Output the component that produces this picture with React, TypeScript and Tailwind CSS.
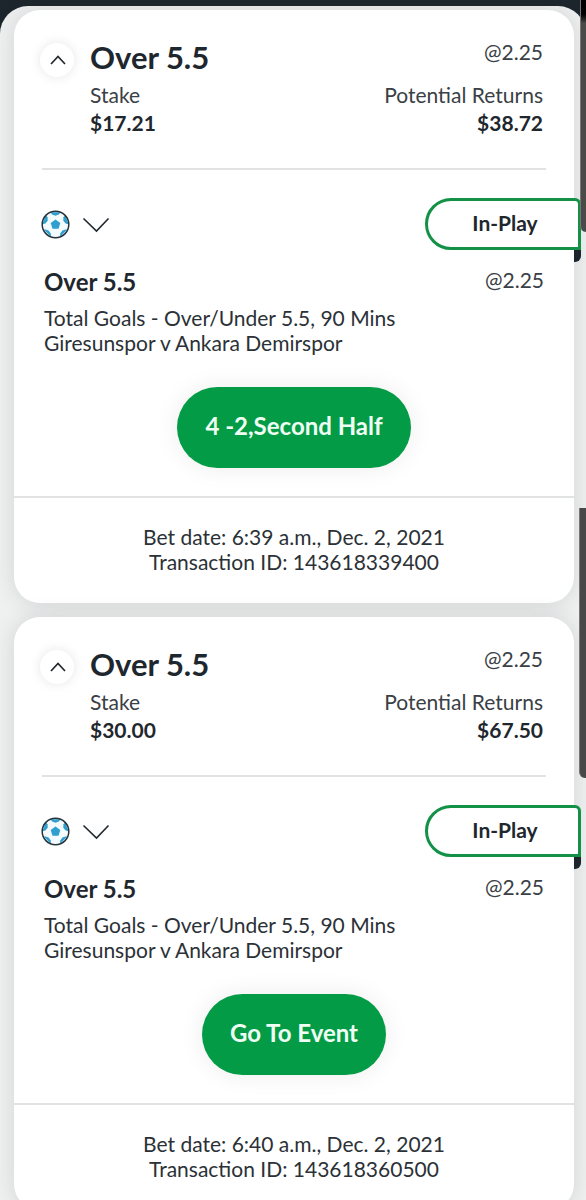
import React from 'react'

const bets = [
  {
    id: '143618339400',
    selection: 'Over 5.5',
    odds: '@2.25',
    stake: '$17.21',
    returns: '$38.72',
    market: 'Total Goals - Over/Under 5.5, 90 Mins',
    event: 'Giresunspor v Ankara Demirspor',
    action: '4 -2,Second Half',
    date: '6:39 a.m., Dec. 2, 2021',
  },
  {
    id: '143618360500',
    selection: 'Over 5.5',
    odds: '@2.25',
    stake: '$30.00',
    returns: '$67.50',
    market: 'Total Goals - Over/Under 5.5, 90 Mins',
    event: 'Giresunspor v Ankara Demirspor',
    action: 'Go To Event',
    date: '6:40 a.m., Dec. 2, 2021',
  },
]

type Bet = (typeof bets)[number]

function BallIcon() {
  return (
    <svg width="29" height="29" viewBox="0 0 29 29" aria-hidden="true">
      <circle cx="14.5" cy="14.5" r="13.2" fill="#f4fbff" />
      <g fill="#2f9fd0">
        <path d="M14.5 9.6l4.8 3.5-1.8 5.6h-6l-1.8-5.6z" />
        <path d="M9.5 2.2h10l-1.6 2.4-3.4 1.2-3.4-1.2z" />
        <path d="M24.2 5.3l3.3 9-2.9-.7-2.3-2.9.1-3.4z" />
        <path d="M4.8 5.3l-3.3 9 2.9-.7 2.3-2.9-.1-3.4z" />
        <path d="M26.3 19.6l-7.2 7.2.1-3.4 2.2-2.8 3.2-1z" />
        <path d="M2.7 19.6l7.2 7.2-.1-3.4-2.2-2.8-3.2-1z" />
      </g>
      <circle
        cx="14.5"
        cy="14.5"
        r="13.3"
        fill="none"
        stroke="#26343d"
        strokeWidth="1.5"
      />
    </svg>
  )
}

function BetCard({ bet }: { bet: Bet }) {
  return (
    <article className="rounded-[26px] bg-white pt-[29px] pb-[29px] shadow-[0_0_22px_rgba(35,37,40,0.14)]">
      <header className="flex items-start pr-[31px] pl-[26px]">
        <button
          aria-label="Collapse bet"
          className="mt-1 mr-4 flex size-[34px] shrink-0 items-center justify-center rounded-full bg-white pl-0.5 shadow-[0_0_12px_rgba(0,0,0,0.1)]"
        >
          <svg width="16" height="10" viewBox="0 0 16 10" fill="none">
            <path d="M1 9l7-7.5L15 9" stroke="#22282d" strokeWidth="1.7" />
          </svg>
        </button>
        <div className="flex-1">
          <h2 className="mb-1.5 text-[31px] leading-9 font-bold">
            {bet.selection}
          </h2>
          <p className="text-[21px] leading-7 text-[#3a4045]">Stake</p>
          <p className="text-[21px] leading-7 font-bold">{bet.stake}</p>
        </div>
        <div className="text-right">
          <p className="mb-4 text-[21px] leading-[26px] text-[#3a4045]">
            {bet.odds}
          </p>
          <p className="text-[21px] leading-7 text-[#3a4045]">
            Potential Returns
          </p>
          <p className="text-[21px] leading-7 font-bold">{bet.returns}</p>
        </div>
      </header>

      <hr className="mx-7 mt-[31px] border-t-2 border-[#e1e2e3]" />

      <div className="mt-7 flex items-center pl-[27px]">
        <BallIcon />
        <button aria-label="Show details" className="ml-3">
          <svg width="28" height="18" viewBox="0 0 28 18" fill="none">
            <path d="M1.5 3.5L14.5 16l12-12.5" stroke="#22282d" strokeWidth="1.6" />
          </svg>
        </button>
        <div className="relative -mr-[7px] ml-auto flex h-[52px] w-[156px] items-center justify-center rounded-l-[26px] rounded-tr-md border-[3px] border-[#139147] bg-white pb-[3px] pl-1 text-[21px] font-bold">
          In-Play
          <span className="absolute top-full -right-[3px] mt-[3px] h-3 w-[7px] rounded-br-md bg-[#1d262c]" />
        </div>
      </div>

      <div className="px-[30px]">
        <div className="mt-[18px] flex justify-between">
          <h3 className="text-2xl leading-7 font-bold">{bet.selection}</h3>
          <span className="text-[21px] leading-6 text-[#3a4045]">
            {bet.odds}
          </span>
        </div>
        <p className="mt-[9px] text-[21px] leading-[25px] text-[#2b3136]">
          {bet.market}
        </p>
        <p className="text-[21px] leading-[25px] text-[#2b3136]">{bet.event}</p>
      </div>

      <div className="mt-8 flex justify-center">
        <button className="h-[81px] rounded-full bg-[#039b45] px-7 pb-1 text-2xl font-bold text-[#effff4] shadow-[0_0_24px_rgba(0,0,0,0.08)]">
          {bet.action}
        </button>
      </div>

      <footer className="mt-7 border-t-2 border-[#e1e2e3] pt-[26px] text-center text-[21px] leading-[25px] text-[#2b3136]">
        <p>Bet date: {bet.date}</p>
        <p>Transaction ID: {bet.id}</p>
      </footer>
    </article>
  )
}

export default function App() {
  return (
    <div className="relative h-screen overflow-hidden bg-[#1d262d] pt-[6px] font-['Lato',sans-serif] text-[#1f272e]">
      <main className="flex min-h-full flex-col gap-[14px] rounded-t-[28px] bg-[#eff1f1] pt-1 pr-3 pl-[14px]">
        {bets.map((bet) => (
          <BetCard key={bet.id} bet={bet} />
        ))}
      </main>

      {/* dark edges over the right side of the page */}
      <div className="absolute top-0 right-0 h-[232px] w-[6px] rounded-bl-md border-l border-[#777] bg-linear-to-b from-black from-5% to-[#4a4a48] to-10%" />
      <div className="absolute top-[508px] right-0 h-[270px] w-[7px] rounded-bl-md border-l border-[#777] bg-[#484848]" />
    </div>
  )
}
